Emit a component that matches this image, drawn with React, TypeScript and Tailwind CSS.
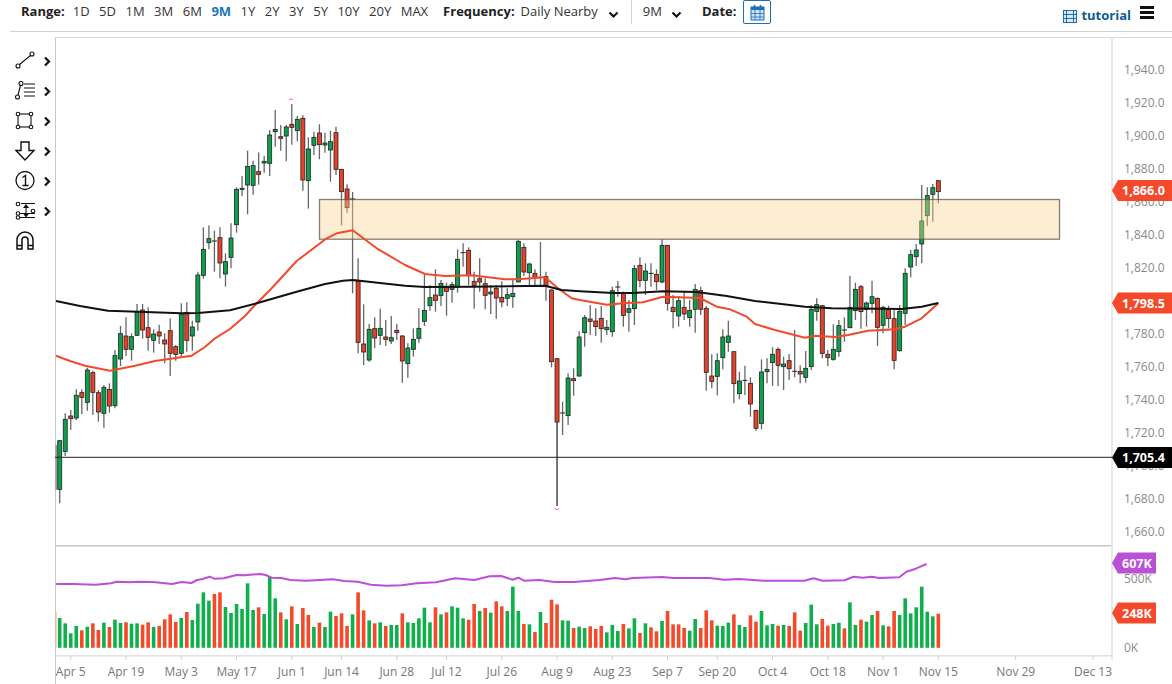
import React from "react";

type Row = [number, number, number, number, number];

// wick top, body top, body bottom, wick bottom, colour (1 up, 0 down, 2 doji), traced at 3x
const slice1: Row[] = [
  [1020,1022,1168,1210,1],[940,958,1054,1068,1],[930,948,956,990,0],[868,886,954,960,1],[868,878,892,942,0],
  [803,810,907,932,1],[812,818,877,945,0],[870,878,936,965,0],[855,862,940,983,1],[850,868,918,938,0],
  [750,767,917,925,1],[678,701,777,798,1],[652,708,748,768,0],[700,710,748,782,1],[612,636,706,708,1],
  [612,630,690,716,0],[622,683,712,752,0],[688,702,721,758,1],[674,696,708,732,0],[700,720,732,790,0],
  [655,692,760,828,0],[735,740,763,782,0],[610,642,760,772,1],[607,637,721,755,0],[662,681,708,752,1],
  [515,525,666,692,1],[382,448,526,536,1],[376,416,428,448,1],[392,423,425,515,2],[382,413,489,535,0],
  [460,485,522,560,1],[370,414,472,505,1],[262,268,374,398,1],[228,265,268,288,1],[152,199,255,343,1],
  [182,197,256,284,1],[157,215,223,254,0],[168,184,189,218,1],[90,105,190,228,1],[30,88,95,140,1],
  [75,110,115,152,0],[75,81,108,184,1],[12,73,82,134,0],[48,58,92,124,1],[46,55,240,272,0],
  [112,147,242,326,1],[95,112,136,165,1],[73,99,134,178,0],[98,129,135,158,1],[92,125,150,245,1],
  [80,98,208,225,0],[208,208,275,376,0],[253,267,323,338,0],[276,297,299,580,2],[475,543,727,760,0],
  [613,732,756,795,0],[672,688,780,785,1],[652,686,714,745,0],[626,685,706,735,1],[660,711,718,738,0],
  [648,713,723,732,1],[672,691,698,720,0],[705,708,783,848,0],[730,744,791,833,1],
];

const slice2: Row[] = [
  [325,358,388,410,1],[265,325,355,368,1],[165,271,304,318,1],[195,233,257,272,1],[148,225,241,275,0],
  [180,190,227,258,1],[188,201,214,287,0],[185,194,208,248,1],[88,118,201,218,1],[70,98,100,140,2],
  [82,91,167,196,0],[155,184,196,266,0],[115,176,186,215,0],[175,191,226,268,0],[195,216,222,282,1],
  [195,205,234,296,0],[184,232,246,262,0],[205,224,235,258,1],[178,220,230,263,1],[60,64,186,186,1],
  [70,82,156,168,0],[128,132,158,196,1],[148,160,173,196,0],[66,172,175,198,2],[155,170,198,242,0],
  [208,210,425,442,0],[415,416,606,858,0],[545,579,581,645,2],[460,474,587,615,1],[445,476,482,527,0],
  [334,351,468,470,1],[285,293,338,380,1],[255,297,304,345,0],[265,303,320,348,0],[258,295,326,368,0],
  [300,322,329,345,1],[200,212,335,350,1],[183,201,205,230,2],[215,218,286,320,0],[240,266,277,335,1],
  [135,146,266,315,1],[112,136,181,202,0],[130,153,181,225,1],[130,160,163,200,2],[148,163,185,210,0],
  [58,76,186,190,1],[75,76,250,272,0],[225,262,275,325,0],[228,242,288,320,1],[215,262,282,300,0],
  [240,271,293,320,1],[192,208,268,338,1],[200,212,268,285,0],[258,265,457,512,0],[403,468,484,505,0],
  [400,422,469,526,1],[328,351,413,448,1],[302,348,367,395,1],[395,395,491,550,0],[455,483,521,538,1],
  [437,481,483,525,2],[472,490,552,590,0],[570,571,625,632,0],
];

const slice3: Row[] = [
  [568,606,760,778,1],[565,598,605,640,1],[532,553,578,648,1],[532,538,586,648,0],[560,582,590,660,1],
  [552,572,596,630,0],[480,604,606,622,2],[586,604,612,640,0],[543,595,622,638,1],[405,418,590,600,1],
  [385,404,424,452,1],[405,407,550,565,0],[540,553,563,588,0],[463,538,568,572,1],[450,467,545,560,1],
  [442,480,482,515,2],[317,412,473,475,1],[338,358,422,450,1],[345,350,425,476,0],[395,399,418,470,1],
  [332,380,400,430,1],[382,385,472,528,0],[407,412,466,490,1],[407,417,446,475,0],[420,446,571,598,0],
  [405,424,542,545,1],[295,310,430,465,1],[240,254,291,322,1],[222,240,260,288,1],[45,153,222,280,1],
  [52,77,137,168,1],[42,53,73,155,1],[30,32,65,100,0],
];

const candles = [
  ...slice1.map((r) => r.map((v, k) => (k < 4 ? 100 + v / 3 : v))),
  ...slice2.map((r) => r.map((v, k) => (k < 4 ? 220 + v / 3 : v))),
  ...slice3.map((r) => r.map((v, k) => (k < 4 ? 170 + v / 3 : v))),
];

const cx = (i: number) => 59.7 + 5.526 * i;

// volume bar tops, y = 260 + z / 3, colour as in the candles
const vol: [number, number][] = [
  [1074,1],[1090,1],[1120,1],[1098,1],[1111,0],[1100,1],[1090,0],[1110,0],[1088,1],[1101,0],
  [1079,1],[1089,1],[1087,0],[1091,1],[1090,1],[1094,0],[1087,0],[1101,1],[1098,0],[1078,0],
  [1063,0],[1086,0],[1074,1],[1056,0],[1080,1],[1031,1],[997,1],[1022,1],[1002,0],[997,0],
  [1041,1],[1059,1],[1032,1],[1047,1],[970,1],[1050,1],[1042,0],[1062,1],[950,1],[1015,1],
  [1057,0],[1078,1],[1039,0],[1092,1],[1044,0],[1065,0],[1101,1],[1088,0],[1101,1],[1055,1],
  [1068,0],[1060,0],[1098,0],[1063,1],[997,0],[1051,0],[1081,1],[1090,0],[1087,1],[1098,0],
  [1095,1],[1095,1],[1060,0],[1087,1],[1089,1],[1075,1],[1043,1],[1087,1],[1042,0],[1063,1],
  [1057,0],[1039,1],[1043,1],[1075,1],[1079,0],[1032,0],[1053,1],[1044,0],[1058,1],[1024,0],
  [1039,0],[1053,1],[980,1],[1053,1],[1092,0],[1093,1],[1116,0],[1056,1],[1089,0],[1019,0],
  [1033,0],[1081,1],[1082,1],[1104,0],[1100,1],[1104,1],[1099,0],[1107,0],
  [1098,0],[1117,1],[1095,1],[1113,1],[1092,0],[1105,1],[1075,1],[1119,0],[1090,1],[1102,0],
  [1114,0],[1083,1],[1053,0],[1093,0],[1093,0],[1104,0],[1112,1],[1077,1],[1104,0],[1051,0],
  [1081,0],[1097,1],[1098,1],[1088,1],[1063,0],[1095,1],[1101,1],[1066,0],[1085,0],[1053,1],
  [1096,1],[1092,1],[1097,0],[1095,1],[1098,0],[1057,0],[1112,0],[1089,1],[1034,1],[1093,1],
  [1077,0],[1097,0],[1092,1],[1088,1],[1105,0],[1027,1],[1095,1],[1079,0],[1085,1],[1065,1],
  [1053,0],[1096,1],[1099,0],[1053,0],[1065,1],[1015,1],[1060,1],[1042,1],[980,1],[1055,1],
  [1069,1],[1061,0],
];

const black = "56,301 80,306 108,310.7 138,311.7 181.7,313.3 198,313 230,310.3 256.7,303.3 296.7,291.7 325,284 343,280.7 353,280 380,283 405,285.7 425,287 471.7,286.7 545,285.7 561.7,290 580,291.3 613,293 633,293 663,291.3 696.7,292 726.7,296 755,301 805,306.7 831.7,308.3 901.7,309 921.7,306.7 938.3,303";
const red = "56,355.7 70,361 85,365.7 110,370.7 135,365.7 155,361 191.7,355.7 205,347 215,338.3 230,329 245,316 256.7,303.3 270,290 296.7,261 326.7,238.3 336.7,233.3 352.7,230.3 376.7,248.3 405,265 425,274 445,276 471.7,275.3 505,279.3 518,279.3 545,277.3 558,288.3 571.7,298.3 580,300 606.7,304.7 623,303.3 643,302.3 663,296.7 700,298 716.7,306.7 730,309.3 746.7,316.7 755,324 775,330 805,337.7 815,335.7 835,337 848,335 868,330.7 895,329.3 905,326.7 921.7,318.3 938.3,303.3";

const purple = [
  ...[[147,972],[190,972],[250,974],[290,970],[305,965],[340,967],[360,965],[400,966],[450,972],[475,966],[500,969],[515,960],[530,957],[548,950],[560,956],[585,955],[618,945],[640,946],[680,942],[695,945],[710,953],[735,954],[760,960],[800,962],[870,958],[900,963],[935,965],[970,974],[1010,977],[1050,976],[1090,970],[1140,967],[1190,955],[1240,960],[1280,949],[1310,948],[1340,959],[1355,953],[1370,962],[1410,960],[1450,966],[1500,966],[1568,960]].map(([x, y]) => [x * 0.3825, y]),
  ...[[40,954],[70,958],[90,954],[170,951],[200,954],[300,954],[340,959],[380,957],[450,962],[560,962],[585,955],[610,962],[670,961],[695,950],[720,953],[745,950],[765,954],[820,952],[840,935],[865,926],[895,912]].map(([x, y]) => [600.1 + x * 0.3648, y]),
].map(([x, y]) => `${x.toFixed(1)},${(260 + y / 3).toFixed(1)}`).join(" ");

const prices = [
  ["1,940.0", 69], ["1,920.0", 102], ["1,900.0", 135.5], ["1,880.0", 168.5], ["1,860.0", 201.5], ["1,840.0", 234.5],
  ["1,820.0", 267.5], ["1,800.0", 300.5], ["1,780.0", 333.5], ["1,760.0", 366.5], ["1,740.0", 399.5], ["1,720.0", 432.5],
  ["1,700.0", 465.5], ["1,680.0", 498.5], ["1,660.0", 531.5],
] as [string, number][];

const ticks = [
  ["Apr 5", cx(2)], ["Apr 19", cx(12)], ["May 3", cx(22)], ["May 17", cx(32)], ["Jun 1", cx(42)], ["Jun 14", cx(51)],
  ["Jun 28", cx(61)], ["Jul 12", cx(70)], ["Jul 26", cx(80)], ["Aug 9", cx(90)], ["Aug 23", cx(100)], ["Sep 7", cx(110)],
  ["Sep 20", cx(119)], ["Oct 4", cx(129)], ["Oct 18", cx(139)], ["Nov 1", cx(149)], ["Nov 15", cx(159)],
  ["Nov 29", 1015.7], ["Dec 13", 1093],
] as [string, number][];

const Badge = ({ y, w, fill, text }: { y: number; w: number; fill: string; text: string }) => (
  <g>
    <path d={`M1112 ${y} L1118 ${y - 10.5} L${1112 + w} ${y - 10.5} L${1112 + w} ${y + 10.5} L1118 ${y + 10.5} Z`} fill={fill} />
    <text x={1122} y={y + 4.5} fontSize="12.5" fontWeight="700" fill="#fff">{text}</text>
  </g>
);

const Chevron = () => (
  <svg width="8" height="11" viewBox="0 0 8 11" className="ml-[7px]">
    <path d="M2 1.5 L6 5.5 L2 9.5" fill="none" stroke="#111" strokeWidth="2.2" />
  </svg>
);

const Down = () => (
  <svg width="11" height="8" viewBox="0 0 11 8">
    <path d="M1.5 1.5 L5.5 5.5 L9.5 1.5" fill="none" stroke="#111" strokeWidth="2.2" />
  </svg>
);

const tools = [
  <>
    <circle cx="3" cy="15" r="2" /><circle cx="17" cy="3" r="2" /><path d="M4.5 13.5 L15.5 4.5" />
  </>,
  <>
    <circle cx="2.5" cy="16" r="2" /><circle cx="6" cy="2.5" r="2" /><path d="M3 14 L5.5 4.5" />
    <path d="M9 3 H20 M9 7 H20 M9 11 H20 M9 15 H20" />
  </>,
  <>
    <rect x="3" y="3" width="13" height="13" />
    <g fill="#fff"><circle cx="3" cy="3" r="1.8" /><circle cx="16" cy="3" r="1.8" /><circle cx="3" cy="16" r="1.8" /><circle cx="16" cy="16" r="1.8" /></g>
  </>,
  <path d="M6 1 H14 V9.5 H19 L10 19 L1 9.5 H6 Z" strokeWidth="1.4" />,
  <>
    <circle cx="10" cy="9.5" r="9" strokeWidth="1.3" />
    <path d="M7.5 6.5 L10.5 4.5 V14.5 M7.5 14.5 H13.5" strokeWidth="1.4" />
  </>,
  <>
    <path d="M6 2.5 H20 M2 12.5 H20 M2 16.5 H20 M11 4 V15" />
    <path d="M9 6.5 L11 4 L13 6.5 Z M9 13 L11 15.5 L13 13 Z" fill="#111" />
    <g fill="#fff"><circle cx="3" cy="3" r="1.8" /><circle cx="3" cy="12.5" r="1.8" /><circle cx="3" cy="16.5" r="1.8" /><circle cx="18" cy="10" r="1.8" /></g>
  </>,
  <path d="M2 18 V9 a8 8 0 0 1 16 0 V18 H13 V9 a3 3 0 0 0 -6 0 V18 Z M2 14.5 H7 M13 14.5 H18" strokeWidth="1.5" />,
];

export default function App() {
  const ranges = ["1D", "5D", "1M", "3M", "6M", "9M", "1Y", "2Y", "3Y", "5Y", "10Y", "20Y", "MAX"];

  return (
    <div className="w-[1172px] h-[684px] overflow-hidden bg-white font-['Open_Sans',sans-serif] text-[13px] text-[#333]">
      <header className="ml-[10px] h-[32px] border-b border-[#d2d2d2] flex items-start pl-[11px]">
        <span className="mt-[2px] font-bold text-[#222]">Range:</span>
        <div className="flex gap-[9.5px] ml-[8px] mt-[2px]">
          {ranges.map((r) => (
            <span key={r} className={r === "9M" ? "font-bold text-[#1b75bb]" : ""}>{r}</span>
          ))}
        </div>
        <span className="ml-[15px] mt-[2px] font-bold text-[#222]">Frequency:</span>
        <span className="ml-[6px] mt-[2px]">Daily Nearby</span>
        <div className="ml-[10px] mt-[11px]"><Down /></div>
        <div className="ml-[12px] h-[24px] border-l border-[#d2d2d2]" />
        <span className="ml-[11px] mt-[2px]">9M</span>
        <div className="ml-[9px] mt-[11px]"><Down /></div>
        <span className="ml-[20px] mt-[2px] font-bold text-[#222]">Date:</span>
        <div className="ml-[7px] w-[28px] h-[24px] border border-[#1f6fb2] rounded-[2px] flex items-center justify-center">
          <svg width="15" height="17" viewBox="0 0 15 17">
            <rect x="1" y="3" width="13" height="13" fill="#cfe3f5" stroke="#1f6fb2" />
            <rect x="1" y="3" width="13" height="3" fill="#1f6fb2" />
            <path d="M5 6 V16 M10 6 V16 M1 9.5 H14 M1 13 H14" stroke="#1f6fb2" strokeWidth="0.8" />
            <path d="M4.5 1 V4 M10.5 1 V4" stroke="#1f6fb2" strokeWidth="1.6" />
          </svg>
        </div>
        <div className="ml-auto flex items-center mr-[18px] mt-[6px]">
          <svg width="14" height="13" viewBox="0 0 14 13" className="mt-[2px]">
            <rect x="0.5" y="0.5" width="13" height="12" fill="#d7e8f6" stroke="#1f6fb2" />
            <path d="M3.5 0.5 V12.5 M10.5 0.5 V12.5 M3.5 4.5 H10.5 M3.5 8.5 H10.5 M0.5 4.5 H3.5 M0.5 8.5 H3.5 M10.5 4.5 H13.5 M10.5 8.5 H13.5" stroke="#1f6fb2" />
          </svg>
          <span className="ml-[4px] font-bold text-[#0b5c9a] text-[13px]">tutorial</span>
          <div className="ml-[9px] mb-[6px] w-[14px] flex flex-col gap-[2px]">
            <div className="h-[3px] bg-[#111]" />
            <div className="h-[3px] bg-[#111]" />
            <div className="h-[3px] bg-[#111]" />
          </div>
        </div>
      </header>

      <main className="flex h-[652px]">
        <aside className="w-[55px] pt-[19px] pl-[15px] flex flex-col gap-[10px]">
          {tools.map((t, i) => (
            <div key={i} className="h-[20px] flex items-center">
              <svg width="21" height="20" viewBox="0 0 21 20" fill="none" stroke="#111" strokeWidth="1.1">{t}</svg>
              {i < 6 && <Chevron />}
            </div>
          ))}
        </aside>

        <svg width="1117" height="652" viewBox="55 32 1117 652" className="block font-['Open_Sans',sans-serif]">
          {/* frame */}
          <path d="M55.5 37.5 H1172" stroke="#d8d8d8" strokeWidth="1" />
          <path d="M55.5 37 V684" stroke="#c8c8c8" strokeWidth="1" />
          <path d="M55 545.7 H1112" stroke="#c8c8c8" strokeWidth="1.5" />
          <path d="M1112 37 V660" stroke="#e2e2e2" strokeWidth="1.5" />
          <path d="M55 655.8 H1112" stroke="#e0e0e0" strokeWidth="1.5" />

          {/* first, cut off candle */}
          <rect x="55.4" y="445" width="1.6" height="45" fill="#999" />

          {candles.map(([wt, bt, bb, wb, c], i) => {
            const x = cx(i);
            return (
              <g key={i}>
                <path d={`M${x} ${wt} V${wb}`} stroke="#666" strokeWidth={i === 90 ? 1.8 : 1.3} />
                {c === 2 ? (
                  <path d={`M${x - 2.5} ${bt} H${x + 2.5}`} stroke="#222" strokeWidth="1" />
                ) : (
                  <rect x={x - 2} y={bt} width="4" height={bb - bt} fill={c === 1 ? "#0aa14a" : "#e8412a"} stroke="#222" strokeWidth="0.8" />
                )}
              </g>
            );
          })}
          <path d="M289 100 q2 -2.5 4 0" fill="none" stroke="#f4492b" strokeWidth="0.8" />
          <path d="M555 508.5 q2 2.5 4 0" fill="none" stroke="#f4492b" strokeWidth="0.8" />

          {/* supply zone */}
          <rect x="319.5" y="199.5" width="740" height="39.7" fill="#fad491" fillOpacity="0.4" stroke="#5c5644" strokeOpacity="0.75" strokeWidth="1.3" />

          <path d="M55 457.3 H1112" stroke="#222" strokeWidth="1" />
          <polyline points={red} fill="none" stroke="#f4492b" strokeWidth="2" strokeLinejoin="round" />
          <polyline points={black} fill="none" stroke="#111" strokeWidth="2" strokeLinejoin="round" />

          {vol.map(([top, c], i) => {
            const y = 260 + top / 3;
            return <rect key={i} x={cx(i) - 1.8} y={y} width="3.6" height={647.8 - y} fill={c ? "#0db04b" : "#f4492b"} />;
          })}
          <rect x="55.4" y="612" width="1.2" height="35.8" fill="#f9b5a8" />
          <polyline points={purple} fill="none" stroke="#bb4fd6" strokeWidth="2" strokeLinejoin="round" />

          {prices.map(([p, y]) => (
            <text key={p} x="1124" y={y + 4.5} fontSize="12" fill="#8a8a8a">{p}</text>
          ))}
          <text x="1124" y="583" fontSize="12" fill="#8a8a8a">500K</text>
          <text x="1124" y="652" fontSize="12" fill="#8a8a8a">0K</text>

          {ticks.map(([t, x]) => (
            <g key={t}>
              <path d={`M${x} 656 V660`} stroke="#d0d0d0" strokeWidth="1" />
              <text x={x} y="676" fontSize="12" fill="#777" textAnchor="middle">{t}</text>
            </g>
          ))}

          <Badge y={190.5} w={60} fill="#f4492b" text="1,866.0" />
          <Badge y={303} w={60} fill="#f4492b" text="1,798.5" />
          <Badge y={457.5} w={60} fill="#000" text="1,705.4" />
          <Badge y={563} w={44} fill="#bb4fd6" text="607K" />
          <Badge y={613} w={44} fill="#f4492b" text="248K" />
        </svg>
      </main>
    </div>
  );
}
